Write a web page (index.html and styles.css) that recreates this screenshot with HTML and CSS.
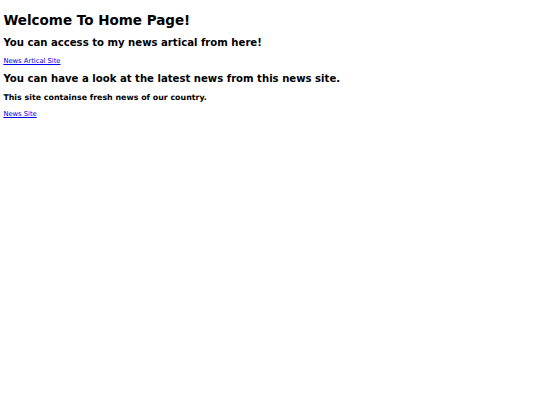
FILE: index.html
```html
<!DOCTYPE html>
<html>
<head>
<meta charset="utf-8">
<title>Home</title>
<link rel="stylesheet" href="styles.css">
</head>
<body class="page">
<h1 class="title">Welcome To Home Page!</h1>
<h2 class="sub">You can access to my news artical from here!</h2>
<p class="para"><a class="link" href="#">News Artical Site</a></p>
<h2 class="sub">You can have a look at the latest news from this news site.</h2>
<h3 class="minor">This site containse fresh news of our country.</h3>
<p class="para"><a class="link" href="#">News Site</a></p>
</body>
</html>
```
FILE: styles.css
```css
html { background: #fff; }
.page {
  margin: 3.375px;
  font-family: "DejaVu Sans", sans-serif;
  color: #000;
}
.title { font-size: 13.5px; margin: 0.67em 0; font-weight: bold; }
.sub { font-size: 10.125px; margin: 0.83em 0; font-weight: bold; }
.minor { font-size: 7.9px; margin: 1em 0; font-weight: bold; }
.para { font-size: 6.75px; margin: 1em 0; }
.link { color: #0000ee; text-decoration: underline; }
```
